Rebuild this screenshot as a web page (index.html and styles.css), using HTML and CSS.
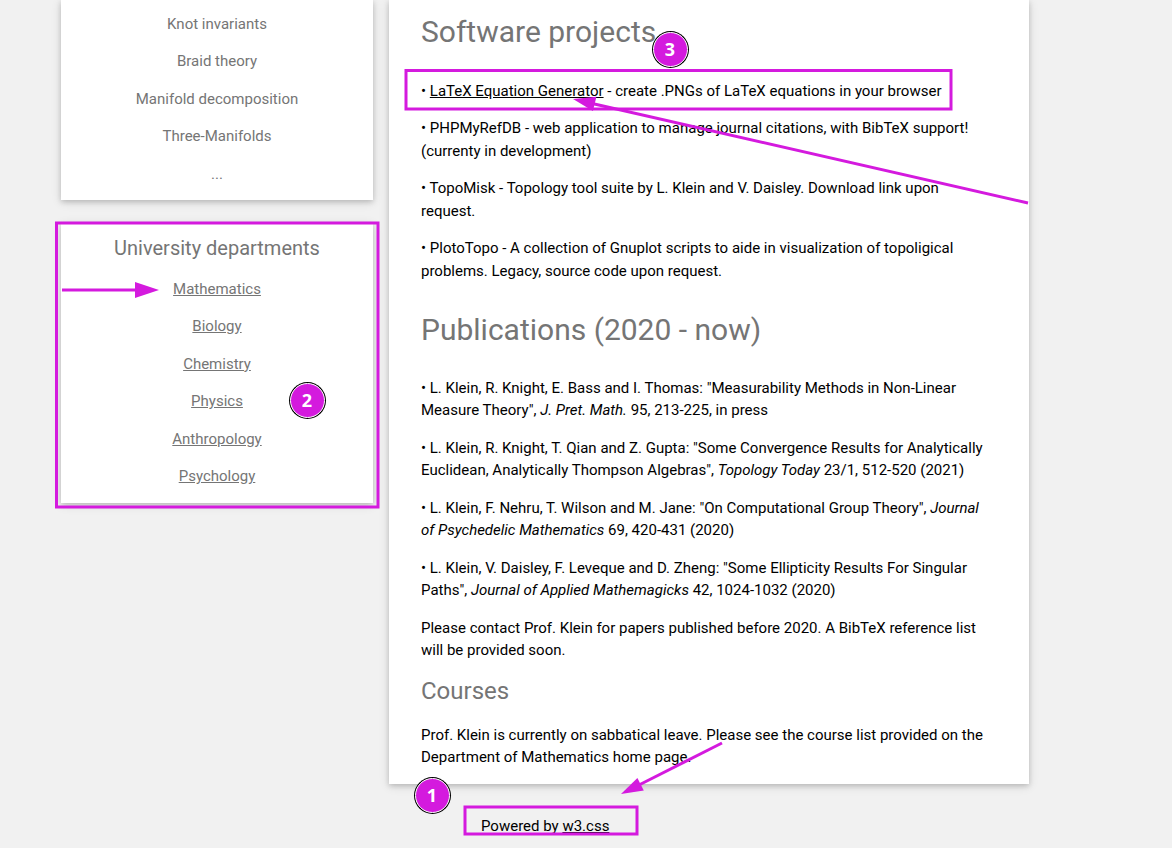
FILE: index.html
```html
<!DOCTYPE html>
<html lang="en">
<head>
<meta charset="utf-8">
<title>Prof. Klein</title>
<link rel="stylesheet" href="styles.css">
</head>
<body>
<div class="page">
  <div class="row">
    <aside class="side">
      <div class="card side-card topics">
        <p class="side-item">Knot invariants</p>
        <p class="side-item">Braid theory</p>
        <p class="side-item">Manifold decomposition</p>
        <p class="side-item">Three-Manifolds</p>
        <p class="side-item dots">...</p>
      </div>
      <div class="card side-card depts">
        <h4 class="side-title">University departments</h4>
        <p class="side-item"><a href="#">Mathematics</a></p>
        <p class="side-item"><a href="#">Biology</a></p>
        <p class="side-item"><a href="#">Chemistry</a></p>
        <p class="side-item"><a href="#">Physics</a></p>
        <p class="side-item"><a href="#">Anthropology</a></p>
        <p class="side-item"><a href="#">Psychology</a></p>
      </div>
    </aside>
    <div class="main-col">
      <main class="card main">
        <h2 class="sec sec-software">Software projects</h2>
        <p class="item">• <a href="#" class="dark-link">LaTeX Equation Generator</a> - create .PNGs of LaTeX equations in your browser</p>
        <p class="item">• PHPMyRefDB - web application to manage journal citations, with BibTeX support! (currenty in development)</p>
        <p class="item">• TopoMisk - Topology tool suite by L. Klein and V. Daisley. Download link upon request.</p>
        <p class="item">• PlotoTopo - A collection of Gnuplot scripts to aide in visualization of topoligical problems. Legacy, source code upon request.</p>
        <h2 class="sec sec-pubs">Publications (2020 - now)</h2>
        <p class="item">• L. Klein, R. Knight, E. Bass and I. Thomas: "Measurability Methods in Non-Linear Measure Theory", <i>J. Pret. Math.</i> 95, 213-225, in press</p>
        <p class="item">• L. Klein, R. Knight, T. Qian and Z. Gupta: "Some Convergence Results for Analytically Euclidean, Analytically Thompson Algebras", <i>Topology Today</i> 23/1, 512-520 (2021)</p>
        <p class="item">• L. Klein, F. Nehru, T. Wilson and M. Jane: "On Computational Group Theory", <i>Journal of Psychedelic Mathematics</i> 69, 420-431 (2020)</p>
        <p class="item">• L. Klein, V. Daisley, F. Leveque and D. Zheng: "Some Ellipticity Results For Singular Paths", <i>Journal of Applied Mathemagicks</i> 42, 1024-1032 (2020)</p>
        <p class="item">Please contact Prof. Klein for papers published before 2020. A BibTeX reference list will be provided soon.</p>
        <h3 class="sub">Courses</h3>
        <p class="item">Prof. Klein is currently on sabbatical leave. Please see the course list provided on the Department of Mathematics home page.</p>
      </main>
      <footer class="footer">
        <p class="foot-text">Powered by <a href="#" class="dark-link">w3.css</a></p>
      </footer>
    </div>
  </div>

  <svg class="overlay" width="1172" height="848" viewBox="0 0 1172 848" xmlns="http://www.w3.org/2000/svg">
    <g fill="none" stroke="#d41ade" stroke-width="3">
      <rect x="406" y="70.5" width="545" height="38.5"/>
      <rect x="56.5" y="223" width="321.5" height="284"/>
      <rect x="465" y="807" width="172" height="27"/>
      <line x1="62" y1="290" x2="140" y2="290"/>
      <line x1="1028" y1="203" x2="590" y2="103"/>
      <line x1="722" y1="743" x2="636" y2="786.5"/>
    </g>
    <g fill="#d41ade">
      <polygon points="135,282 159,290 135,298"/>
      <polygon points="573,99 592.9,111 596.4,96.8"/>
      <polygon points="621,794 643.8,790.4 637.4,777.9"/>
    </g>
  </svg>
  <div class="badge b1">1</div>
  <div class="badge b2">2</div>
  <div class="badge b3">3</div>
</div>
</body>
</html>
```

FILE: styles.css
```css
html, body {
  margin: 0;
  padding: 0;
}

body {
  background: #f1f1f1;
  font-family: Roboto, "Liberation Sans", sans-serif;
  font-size: 15px;
  line-height: 1.5;
  color: #000;
  overflow: hidden;
}

.page {
  position: relative;
  width: 1172px;
  height: 848px;
}

.row {
  display: flex;
  align-items: flex-start;
  padding-left: 61px;
  gap: 16px;
}

.card {
  background: #fff;
  box-shadow: 0 2px 5px 0 rgba(0, 0, 0, 0.16), 0 2px 10px 0 rgba(0, 0, 0, 0.12);
}

.side {
  width: 312px;
  display: flex;
  flex-direction: column;
}

.side-card {
  padding: 0 16px;
  text-align: center;
  color: #757575;
}

.topics {
  padding-top: 12.75px;
}

.depts {
  margin-top: 22.5px;
  padding-top: 10px;
}

.side-title {
  font-size: 20px;
  font-weight: 400;
  line-height: 30px;
  margin: 0 0 15px;
}

.side-item {
  margin: 0 0 15px;
  line-height: 22.5px;
}

.side-item a {
  color: #757575;
  text-decoration: underline;
}

.main-col {
  width: 640px;
  display: flex;
  flex-direction: column;
}

.main {
  padding: 0 42px 0 32px;
  display: flex;
  flex-direction: column;
}

.sec {
  font-size: 30px;
  font-weight: 400;
  line-height: 45px;
  color: #757575;
}

.sec-software {
  margin: 8.5px 0 26.25px;
}

.sec-pubs {
  margin: 9.25px 0 25.25px;
}

.sub {
  font-size: 24px;
  font-weight: 400;
  line-height: 29px;
  color: #757575;
  margin: 0 0 18px;
}

.item {
  margin: 0 0 15px;
  line-height: 22.5px;
}

.dark-link {
  color: #000;
  text-decoration: underline;
}

.footer {
  padding: 31.5px 0 0 92px;
}

.foot-text {
  margin: 0;
  line-height: 22.5px;
}

.overlay {
  position: absolute;
  left: 0;
  top: 0;
  pointer-events: none;
}

.badge {
  position: absolute;
  width: 33px;
  height: 33px;
  border-radius: 50%;
  background: #d41ade;
  border: 1.5px solid #fff;
  box-shadow: 0 0 0 1px #000;
  color: #fff;
  font-family: "Open Sans", Roboto, sans-serif;
  font-weight: 700;
  font-size: 18px;
  line-height: 33px;
  text-align: center;
}

.b1 {
  left: 414.5px;
  top: 777.5px;
}

.b2 {
  left: 289.5px;
  top: 382.5px;
}

.b3 {
  left: 652.5px;
  top: 31.5px;
}
```
